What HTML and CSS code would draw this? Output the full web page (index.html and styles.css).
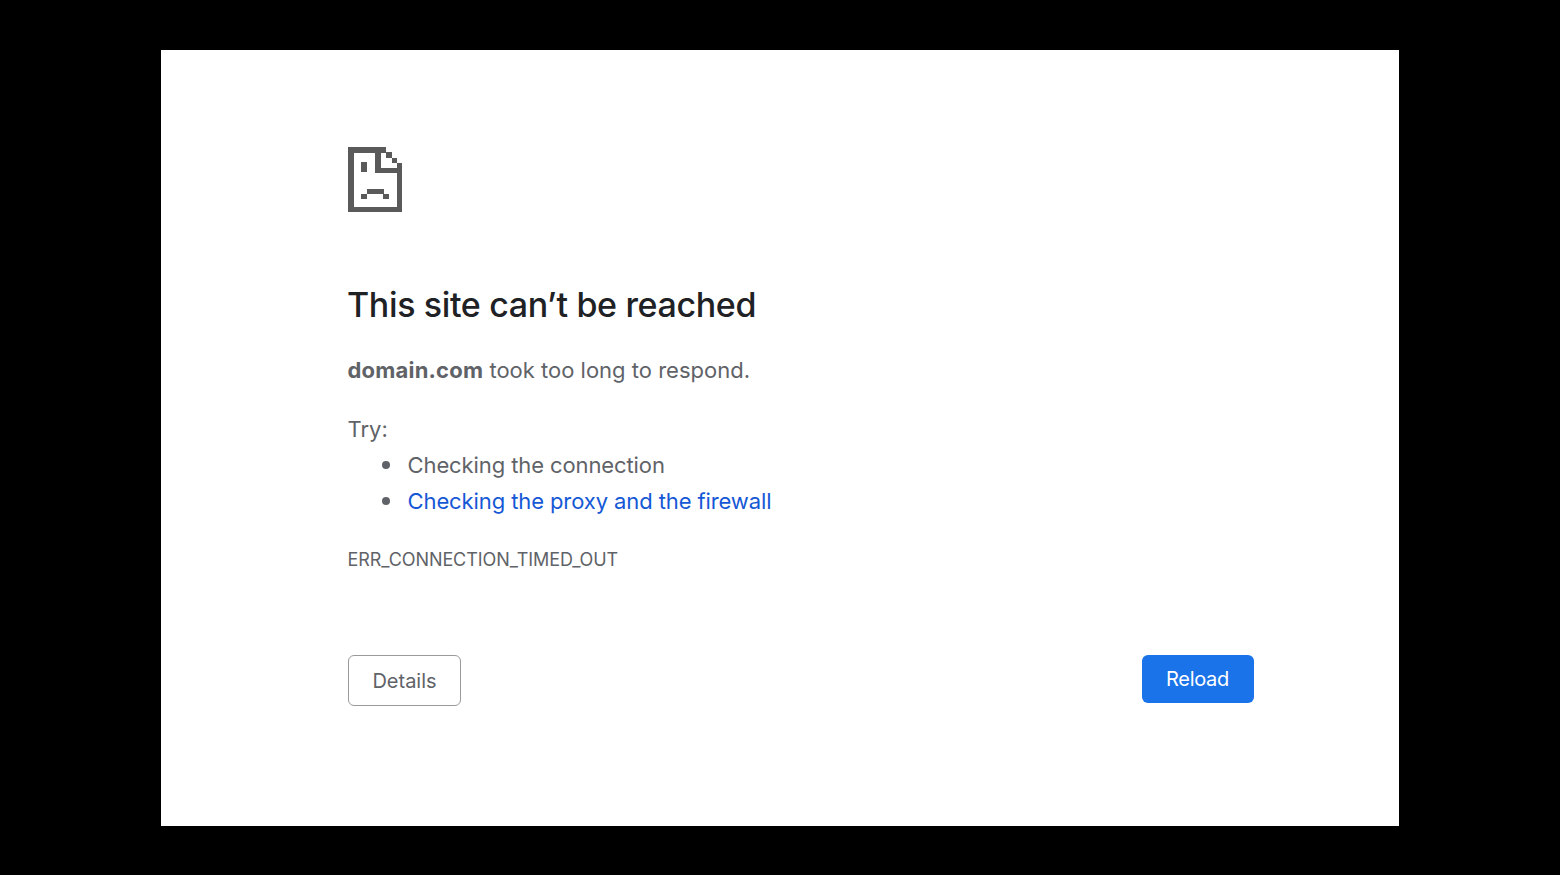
FILE: index.html
```html
<!DOCTYPE html>
<html lang="en">
<head>
<meta charset="utf-8">
<title>domain.com</title>
<link rel="stylesheet" href="styles.css">
</head>
<body>
<main class="panel">
  <svg class="sad-icon" width="54" height="65" viewBox="0 0 54 65" shape-rendering="crispEdges" aria-hidden="true">
    <path d="M0 0H38V5.500H33V21H49V16H54V65H0ZM5.500 5.500V59.500H49V26H27V5.500Z" fill-rule="evenodd"/>
    <rect x="38" y="5" width="6" height="6"/>
    <rect x="44" y="11" width="5" height="5"/>
    <rect x="13" y="15" width="6" height="10"/>
    <rect x="19" y="42" width="17" height="5"/>
    <rect x="13" y="47" width="6" height="5"/>
    <rect x="35" y="47" width="6" height="5"/>
  </svg>
  <h1 class="title">This site can’t be reached</h1>
  <p class="summary"><strong class="host">domain.com</strong> took too long to respond.</p>
  <p class="try">Try:</p>
  <ul class="suggestions">
    <li class="suggestion">Checking the connection</li>
    <li class="suggestion"><a class="link" href="#">Checking the proxy and the firewall</a></li>
  </ul>
  <div class="code">ERR_CONNECTION_TIMED_OUT</div>
  <div class="actions">
    <button class="btn btn-details" type="button">Details</button>
    <button class="btn btn-reload" type="button">Reload</button>
  </div>
</main>
</body>
</html>
```
FILE: styles.css
```css
html, body {
  margin: 0;
  height: 100%;
}
body {
  background: #000;
  padding: 50px 161px 49px;
  box-sizing: border-box;
  font-family: Inter, "Liberation Sans", sans-serif;
}
.panel {
  background: #fff;
  height: 776px;
  box-sizing: border-box;
  padding: 97px 145px 0 187px;
  color: #5f6368;
  font-size: 22px;
}
.sad-icon {
  display: block;
  fill: #5a5a5a;
}
.title {
  margin: 71px 0 0 -1px;
  font-size: 34px;
  line-height: 44px;
  font-weight: 550;
  letter-spacing: -0.36px;
  color: #202124;
}
.summary {
  margin: 25px 0 0 -0.5px;
  line-height: 36px;
}
.host {
  font-weight: 700;
  letter-spacing: 0.2px;
}
.try {
  margin: 23px 0 0 -0.5px;
  line-height: 36px;
}
.suggestions {
  margin: 0;
  padding: 0 0 0 34px;
  list-style: none;
}
.suggestion {
  display: flex;
  align-items: center;
  gap: 17.5px;
  line-height: 36px;
  letter-spacing: -0.1px;
}
.suggestion::before {
  content: "";
  width: 8px;
  height: 8px;
  border-radius: 50%;
  background: #5f6368;
}
.link {
  color: #1558d6;
  text-decoration: none;
}
.code {
  margin: 29px 0 0 -0.5px;
  font-size: 18px;
  line-height: 24px;
  letter-spacing: -0.08px;
}
.actions {
  display: flex;
  justify-content: space-between;
  align-items: flex-start;
  margin-top: 83px;
}
.btn {
  font-family: inherit;
  font-size: 20px;
  border-radius: 6px;
  box-sizing: border-box;
  padding: 0;
}
.btn-details {
  width: 113px;
  height: 51px;
  background: #fff;
  color: #5f6368;
  border: 1px solid #9a9a9a;
}
.btn-reload {
  width: 112px;
  height: 48px;
  padding-right: 1px;
  background: #1a73e8;
  color: #fff;
  border: 0;
  letter-spacing: -0.3px;
}
```
